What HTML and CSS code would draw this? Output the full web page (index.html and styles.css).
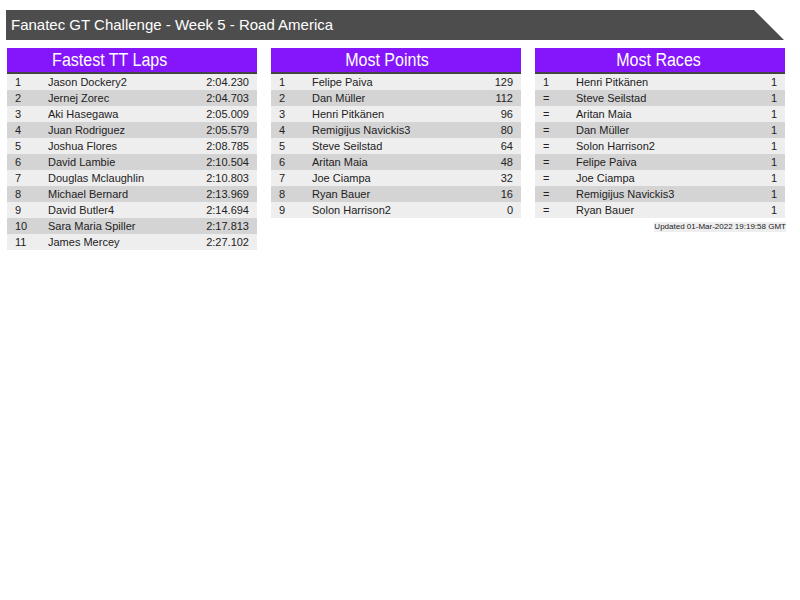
FILE: index.html
```html
<!DOCTYPE html>
<html>
<head>
<meta charset="utf-8">
<link rel="stylesheet" href="styles.css">
</head>
<body>
<div class="page">
  <div class="banner">Fanatec GT Challenge - Week 5 - Road America</div>
  <div class="boards">
    <div class="board">
      <div class="title title-laps"><span class="title-text">Fastest TT Laps</span></div>
      <div class="row"><span class="rank">1</span><span class="name">Jason Dockery2</span><span class="val">2:04.230</span></div>
      <div class="row"><span class="rank">2</span><span class="name">Jernej Zorec</span><span class="val">2:04.703</span></div>
      <div class="row"><span class="rank">3</span><span class="name">Aki Hasegawa</span><span class="val">2:05.009</span></div>
      <div class="row"><span class="rank">4</span><span class="name">Juan Rodriguez</span><span class="val">2:05.579</span></div>
      <div class="row"><span class="rank">5</span><span class="name">Joshua Flores</span><span class="val">2:08.785</span></div>
      <div class="row"><span class="rank">6</span><span class="name">David Lambie</span><span class="val">2:10.504</span></div>
      <div class="row"><span class="rank">7</span><span class="name">Douglas Mclaughlin</span><span class="val">2:10.803</span></div>
      <div class="row"><span class="rank">8</span><span class="name">Michael Bernard</span><span class="val">2:13.969</span></div>
      <div class="row"><span class="rank">9</span><span class="name">David Butler4</span><span class="val">2:14.694</span></div>
      <div class="row"><span class="rank">10</span><span class="name">Sara Maria Spiller</span><span class="val">2:17.813</span></div>
      <div class="row"><span class="rank">11</span><span class="name">James Mercey</span><span class="val">2:27.102</span></div>
    </div>
    <div class="board">
      <div class="title title-points"><span class="title-text">Most Points</span></div>
      <div class="row"><span class="rank">1</span><span class="name">Felipe Paiva</span><span class="val">129</span></div>
      <div class="row"><span class="rank">2</span><span class="name">Dan Müller</span><span class="val">112</span></div>
      <div class="row"><span class="rank">3</span><span class="name">Henri Pitkänen</span><span class="val">96</span></div>
      <div class="row"><span class="rank">4</span><span class="name">Remigijus Navickis3</span><span class="val">80</span></div>
      <div class="row"><span class="rank">5</span><span class="name">Steve Seilstad</span><span class="val">64</span></div>
      <div class="row"><span class="rank">6</span><span class="name">Aritan Maia</span><span class="val">48</span></div>
      <div class="row"><span class="rank">7</span><span class="name">Joe Ciampa</span><span class="val">32</span></div>
      <div class="row"><span class="rank">8</span><span class="name">Ryan Bauer</span><span class="val">16</span></div>
      <div class="row"><span class="rank">9</span><span class="name">Solon Harrison2</span><span class="val">0</span></div>
    </div>
    <div class="board">
      <div class="title title-races"><span class="title-text">Most Races</span></div>
      <div class="row"><span class="rank">1</span><span class="name">Henri Pitkänen</span><span class="val">1</span></div>
      <div class="row"><span class="rank">=</span><span class="name">Steve Seilstad</span><span class="val">1</span></div>
      <div class="row"><span class="rank">=</span><span class="name">Aritan Maia</span><span class="val">1</span></div>
      <div class="row"><span class="rank">=</span><span class="name">Dan Müller</span><span class="val">1</span></div>
      <div class="row"><span class="rank">=</span><span class="name">Solon Harrison2</span><span class="val">1</span></div>
      <div class="row"><span class="rank">=</span><span class="name">Felipe Paiva</span><span class="val">1</span></div>
      <div class="row"><span class="rank">=</span><span class="name">Joe Ciampa</span><span class="val">1</span></div>
      <div class="row"><span class="rank">=</span><span class="name">Remigijus Navickis3</span><span class="val">1</span></div>
      <div class="row"><span class="rank">=</span><span class="name">Ryan Bauer</span><span class="val">1</span></div>
      <div class="updated-wrap"><span class="updated">Updated 01-Mar-2022 19:19:58 GMT</span></div>
    </div>
  </div>
</div>
</body>
</html>
```
FILE: styles.css
```css
html, body {
  margin: 0;
  padding: 0;
  background: #ffffff;
  font-family: "Liberation Sans", Arial, sans-serif;
}
.page {
  padding: 10px 0 0 6px;
}
.banner {
  width: 773px;
  height: 30px;
  line-height: 30px;
  padding-left: 5px;
  background: #4d4d4d;
  color: #ffffff;
  font-size: 15px;
  clip-path: polygon(0 0, 748px 0, 778px 30px, 0 30px);
}
.boards {
  display: flex;
  gap: 14px;
  margin: 8px 0 0 1px;
  align-items: flex-start;
}
.board {
  width: 250px;
}
.title {
  height: 24px;
  line-height: 24px;
  background: #8515fb;
  color: #ffffff;
  font-size: 18px;
  text-align: center;
  border-bottom: 2px solid #444444;
}
.title-text {
  display: inline-block;
  transform: scaleX(0.89);
}
.title-laps {
  padding-right: 44px;
}
.title-points {
  padding-right: 18px;
}
.title-races {
  padding-right: 2px;
}
.row {
  display: flex;
  height: 16px;
  line-height: 16px;
  font-size: 11px;
  color: #222222;
  background: #eeeeee;
}
.row:nth-child(odd) {
  background: #d4d4d4;
}
.rank {
  width: 33px;
  padding-left: 8px;
}
.name {
  flex: 1;
}
.val {
  padding-right: 8px;
  text-align: right;
}
.updated-wrap {
  display: flex;
  justify-content: flex-end;
  margin-top: 4px;
  margin-right: -1px;
}
.updated {
  font-size: 8px;
  line-height: 10px;
  background: #eeeeee;
  color: #222222;
}
```
